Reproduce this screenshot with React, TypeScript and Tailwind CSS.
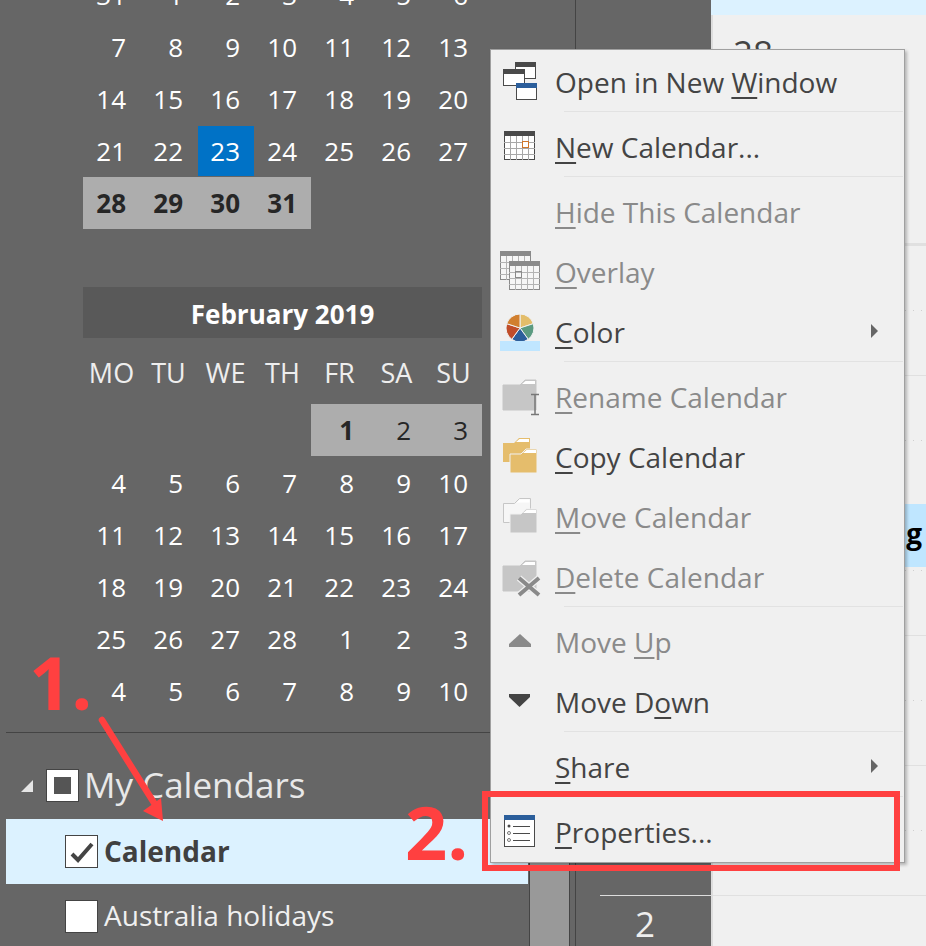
import React from "react";

const font = { fontFamily: '"Open Sans", "Noto Sans", sans-serif' };

type MenuEntry = {
  before: string;
  mnemonic: string;
  after: string;
  disabled?: boolean;
  separator?: boolean;
  submenu?: boolean;
  icon?: React.ReactNode;
};

function Win({ x, y, w, h, title }: { x: number; y: number; w: number; h: number; title: string }) {
  return (
    <g>
      <rect x={x + 0.5} y={y + 0.5} width={w - 1} height={h - 1} fill="#fff" stroke="#4a4a4a" />
      <rect x={x} y={y} width={w} height={5} fill={title} />
    </g>
  );
}

function CalGrid({ x, y, color, line, bg }: { x: number; y: number; color: string; line: string; bg: string }) {
  const cols = [1, 2, 3, 4];
  const rows = [1, 2, 3];
  return (
    <g>
      <rect x={x + 0.5} y={y + 0.5} width={30} height={28} fill={bg} stroke={color} />
      <rect x={x} y={y} width={31} height={5} fill={color} />
      {cols.map((c) => (
        <line key={c} x1={x + c * 6 + 0.5} x2={x + c * 6 + 0.5} y1={y + 5} y2={y + 29} stroke={line} />
      ))}
      {rows.map((r) => (
        <line key={r} y1={y + 5 + r * 6 + 0.5} y2={y + 5 + r * 6 + 0.5} x1={x} x2={x + 31} stroke={line} />
      ))}
    </g>
  );
}

function Folder({ x, y, w, h, fill, tab = "#fff", edge }: { x: number; y: number; w: number; h: number; fill: string; tab?: string; edge?: string }) {
  const t = 5;
  const d = `M${x} ${y + t}H${x + w - 16}L${x + w - 11} ${y}H${x + w}V${y + h}H${x}Z`;
  return (
    <g>
      <path d={d} fill={fill} stroke={edge || "none"} />
      <path d={`M${x + w - 14} ${y + t - 1}L${x + w - 10.5} ${y + 1}H${x + w - 1}V${y + t - 1}Z`} fill={tab} />
    </g>
  );
}

function Slot({ children }: { children: React.ReactNode }) {
  return (
    <svg width="64" height="60" viewBox="0 0 64 60" className="shrink-0 block">
      {children}
    </svg>
  );
}

function wedge(cx: number, cy: number, r: number, from: number, to: number) {
  const p = (a: number) => {
    const rad = (a * Math.PI) / 180;
    return `${cx + r * Math.sin(rad)} ${cy - r * Math.cos(rad)}`;
  };
  return `M${cx} ${cy}L${p(from)}A${r} ${r} 0 0 1 ${p(to)}Z`;
}

const pie = ["#e3bd6a", "#5b9a80", "#2b5e9b", "#c04d2a", "#d17f2f"];

const menu: MenuEntry[] = [
  {
    before: "Open in New ",
    mnemonic: "W",
    after: "indow",
    separator: true,
    icon: (
      <Slot>
        <Win x={24} y={9} w={21} h={17} title="#4a4a4a" />
        <Win x={12} y={16} w={22} h={17} title="#4a4a4a" />
        <Win x={25} y={30} w={21} h={17} title="#2b5e9b" />
      </Slot>
    ),
  },
  {
    before: "",
    mnemonic: "N",
    after: "ew Calendar...",
    separator: true,
    icon: (
      <Slot>
        <CalGrid x={13} y={13} color="#4a4a4a" line="#a8a8a8" bg="#fff" />
        <rect x={31.5} y={23.5} width={6} height={6} fill="#fff" stroke="#d0762a" />
      </Slot>
    ),
  },
  { before: "", mnemonic: "H", after: "ide This Calendar", disabled: true },
  {
    before: "",
    mnemonic: "O",
    after: "verlay",
    disabled: true,
    icon: (
      <Slot>
        <CalGrid x={9} y={8} color="#8a8a8a" line="#b4b4b4" bg="#f6f6f6" />
        <CalGrid x={18} y={18} color="#8a8a8a" line="#b4b4b4" bg="#f6f6f6" />
        <rect x={24.5} y={28.5} width={6} height={6} fill="none" stroke="#8a8a8a" />
      </Slot>
    ),
  },
  {
    before: "",
    mnemonic: "C",
    after: "olor",
    submenu: true,
    separator: true,
    icon: (
      <Slot>
        {pie.map((c, i) => (
          <path key={c} d={wedge(29, 25, 14, i * 72, (i + 1) * 72)} fill={c} stroke="#f0f0f0" strokeWidth="1" />
        ))}
        <rect x={9} y={38} width={40} height={10} fill="#c0e6ff" />
      </Slot>
    ),
  },
  {
    before: "",
    mnemonic: "R",
    after: "ename Calendar",
    disabled: true,
    icon: (
      <Slot>
        <Folder x={12} y={12} w={33} h={30} fill="#c6c6c6" edge="#c6c6c6" />
        <path d="M40 26.500H48M40 46.500H48M44 27V46" stroke="#777" strokeWidth="1.500" fill="none" />
      </Slot>
    ),
  },
  {
    before: "",
    mnemonic: "C",
    after: "opy Calendar",
    icon: (
      <Slot>
        <Folder x={12} y={10} w={27} h={24} fill="#e5bd6c" />
        <Folder x={19} y={21} w={27} h={24} fill="#e5bd6c" edge="#f0f0f0" />
      </Slot>
    ),
  },
  {
    before: "",
    mnemonic: "M",
    after: "ove Calendar",
    disabled: true,
    icon: (
      <Slot>
        <Folder x={12.5} y={10.500} w={27} h={24} fill="#f6f6f6" edge="#c6c6c6" />
        <Folder x={19} y={21} w={27} h={24} fill="#c6c6c6" edge="#f0f0f0" />
      </Slot>
    ),
  },
  {
    before: "",
    mnemonic: "D",
    after: "elete Calendar",
    disabled: true,
    separator: true,
    icon: (
      <Slot>
        <Folder x={12} y={13} w={33} h={30} fill="#c6c6c6" edge="#c6c6c6" />
        <path d="M28 30L48 47M48 30L28 47" stroke="#f0f0f0" strokeWidth="6.500" />
        <path d="M28 30L48 47M48 30L28 47" stroke="#8a8a8a" strokeWidth="4" />
      </Slot>
    ),
  },
  {
    before: "Move ",
    mnemonic: "U",
    after: "p",
    disabled: true,
    icon: (
      <Slot>
        <path d="M29 21L40 31V34H18V31Z" fill="#8a8a8a" />
      </Slot>
    ),
  },
  {
    before: "Move D",
    mnemonic: "o",
    after: "wn",
    separator: true,
    icon: (
      <Slot>
        <path d="M18 21H39V24L28.500 34L18 24Z" fill="#444" />
      </Slot>
    ),
  },
  { before: "", mnemonic: "S", after: "hare", submenu: true, separator: true },
  {
    before: "",
    mnemonic: "P",
    after: "roperties...",
    icon: (
      <Slot>
        <rect x={13.5} y={12.500} width={30} height={31} fill="#fff" stroke="#4a4a4a" />
        <rect x={13} y={12} width={31} height={5} fill="#2b5e9b" />
        <circle cx={18} cy={23} r={1.500} fill="#4a4a4a" />
        <circle cx={18} cy={30} r={1.500} fill="#fff" stroke="#777" />
        <circle cx={18} cy={37} r={1.500} fill="#fff" stroke="#777" />
        <path d="M22 23.500H39M22 30.500H39M22 37.500H39" stroke="#4a4a4a" />
      </Slot>
    ),
  },
];

function DayRow({ days, grey = [], today, boldDays = [] }: { days: (number | null)[]; grey?: number[]; today?: number; boldDays?: number[] }) {
  return (
    <div className="grid grid-cols-7 h-[52px]">
      {days.map((d, i) => {
        const isGrey = grey.includes(i);
        const isToday = today === i;
        const bold = boldDays.includes(i);
        return (
          <div key={i} className={"flex items-center justify-end pr-[14px] " + (isGrey ? "bg-[#adadad] text-[#262626]" : isToday ? "bg-[#0072c6] text-white my-px ml-px" : "text-white") + (bold ? " font-bold" : "")}>
            {d}
          </div>
        );
      })}
    </div>
  );
}

function Check({ checked }: { checked?: boolean }) {
  return (
    <div className="w-[33px] h-[33px] shrink-0 bg-white border border-[#444] flex items-center justify-center">
      {checked && (
        <svg width="31" height="31" viewBox="0 0 31 31">
          <path d="M6 18L12 24L26 8" fill="none" stroke="#444" strokeWidth="4" />
        </svg>
      )}
    </div>
  );
}

function Sidebar() {
  return (
    <div className="w-[528px] shrink-0 overflow-hidden text-[26px]">
      <div className="ml-[83px] w-[399px] -mt-[31px]">
        <DayRow days={[31, 1, 2, 3, 4, 5, 6]} />
        <DayRow days={[7, 8, 9, 10, 11, 12, 13]} />
        <DayRow days={[14, 15, 16, 17, 18, 19, 20]} />
        <DayRow days={[21, 22, 23, 24, 25, 26, 27]} today={2} />
        <DayRow days={[28, 29, 30, 31, null, null, null]} grey={[0, 1, 2, 3]} boldDays={[0, 1, 2, 3]} />
        <div className="mt-[58px] h-[51px] pt-[3px] bg-[#595959] flex items-center justify-center font-bold text-white">February 2019</div>
        <div className="grid grid-cols-7 h-[66px] pt-[4px] text-[#eeeeee] text-[27px]">
          {["MO", "TU", "WE", "TH", "FR", "SA", "SU"].map((d) => (
            <div key={d} className="flex items-center justify-center">
              {d}
            </div>
          ))}
        </div>
        <DayRow days={[null, null, null, null, 1, 2, 3]} grey={[4, 5, 6]} boldDays={[4]} />
        <div className="mt-px">
          <DayRow days={[4, 5, 6, 7, 8, 9, 10]} />
          <DayRow days={[11, 12, 13, 14, 15, 16, 17]} />
          <DayRow days={[18, 19, 20, 21, 22, 23, 24]} />
          <DayRow days={[25, 26, 27, 28, 1, 2, 3]} />
          <DayRow days={[4, 5, 6, 7, 8, 9, 10]} />
        </div>
      </div>
      <div className="mt-[15px] ml-[6px] h-px bg-[#444]" />
      <div className="mt-[36px] h-[33px] flex items-center pl-[21px]">
        <svg width="12" height="12" viewBox="0 0 12 12" className="shrink-0">
          <path d="M12 0V12H0Z" fill="#e6e6e6" />
        </svg>
        <div className="ml-[13px] w-[33px] h-[33px] shrink-0 bg-white border border-[#444] flex items-center justify-center">
          <div className="w-[17px] h-[17px] bg-[#555]" />
        </div>
        <span className="ml-[5px] text-[35px] text-[#e8e8e8] whitespace-nowrap">My Calendars</span>
      </div>
      <div className="mt-[17px] ml-[6px] h-[65px] bg-[#dcf2ff] flex items-center pl-[59px] gap-[6px] text-[28px]">
        <Check checked />
        <span className="font-bold text-[#404040] -mt-[2px]">Calendar</span>
      </div>
      <div className="ml-[6px] h-[65px] flex items-center pl-[59px] gap-[6px] text-[28px]">
        <Check />
        <span className="text-[#f0f0f0] whitespace-nowrap -mt-[3px]">Australia holidays</span>
      </div>
    </div>
  );
}

function ContextMenu() {
  return (
    <div className="absolute left-[490px] top-[49px] w-[415px] h-[814px] bg-[#f0f0f0] border border-[#a0a0a0] pt-[3px] shadow-[2px_2px_3px_rgba(0,0,0,0.25)] text-[28px]">
      {menu.map((item) => (
        <React.Fragment key={item.before + item.mnemonic + item.after}>
          <div className={"h-[60px] flex items-center " + (item.disabled ? "text-[#8a8a8a]" : "text-[#444444]")}>
            <div className="w-[64px] h-[60px] shrink-0">{item.icon}</div>
            <span className="whitespace-pre -mt-[2px]">
              {item.before}
              <u className="underline decoration-[1.5px] underline-offset-[4px]">{item.mnemonic}</u>
              {item.after}
            </span>
            {item.submenu && (
              <svg width="7" height="14" viewBox="0 0 7 14" className="ml-auto mr-[26px] -mt-[4px]">
                <path d="M0 0L7 7L0 14Z" fill="#666" />
              </svg>
            )}
          </div>
          {item.separator && <div className="h-px -mt-[2px] mb-[6px] ml-[73px] mr-px bg-[#e2e2e2]" />}
        </React.Fragment>
      ))}
    </div>
  );
}

function HalfHour({ event }: { event?: boolean }) {
  return (
    <>
      <div className="h-[64px] flex flex-col">
        {event && <div className="h-[63px] shrink-0 -mt-[2px] pb-[6px] bg-[#bfe6ff] flex items-center justify-end pr-[4px] font-bold text-[28px] text-black">g</div>}
      </div>
      <div className="h-px bg-[repeating-linear-gradient(90deg,#cfcfcf_0,#cfcfcf_1px,transparent_1px,transparent_8px)]" />
      <div className="h-[65px] border-b border-[#e0e0e0]" />
    </>
  );
}

function Annotations() {
  return (
    <>
      <div className="absolute left-[29px] top-[632px] text-[74px] leading-[100px] font-bold text-[#ff4040]">1.</div>
      <div className="absolute left-[405px] top-[782px] text-[74px] leading-[100px] font-bold text-[#ff4040]">2.</div>
      <svg width="926" height="946" viewBox="0 0 926 946" className="absolute left-0 top-0 pointer-events-none">
        <path d="M102 720L156 806" stroke="#ff4040" strokeWidth="6.500" strokeLinecap="round" />
        <path d="M143 811L161 798L163 821Z" fill="#ff4040" />
      </svg>
      <div className="absolute left-[482px] top-[791px] w-[418px] h-[80px] border-[6px] border-[#ff4040]" />
    </>
  );
}

export default function App() {
  return (
    <div className="relative w-[926px] h-[946px] overflow-hidden bg-[#666666] flex" style={font}>
      <Sidebar />
      <div className="w-[47px] shrink-0 flex flex-col justify-end pl-px pr-[5px]">
        <div className="h-[120px] bg-[#999999] border-x border-[#444]" />
      </div>
      <div className="w-[136px] shrink-0 border-l border-[#444] flex flex-col justify-end">
        <div className="ml-[24px] h-px bg-[#dddddd]" />
        <div className="h-[50px] pt-[7px] pl-[3px] flex items-center justify-center text-[35px] text-[#eeeeee]">2</div>
      </div>
      <div className="flex-1 bg-[#f0f0f0] border-l-2 border-[#dddddd] min-w-0">
        <div className="h-[15px] -ml-[2px] bg-[#dcf2ff]" />
        <div className="h-[228px] pl-[20px] pt-[14px] text-[35px] leading-[48px] text-[#444444]">28</div>
        <div className="h-[3px] bg-[#e0e0e0]" />
        <HalfHour />
        <HalfHour />
        <HalfHour event />
        <HalfHour />
        <HalfHour />
      </div>
      <ContextMenu />
      <Annotations />
    </div>
  );
}
